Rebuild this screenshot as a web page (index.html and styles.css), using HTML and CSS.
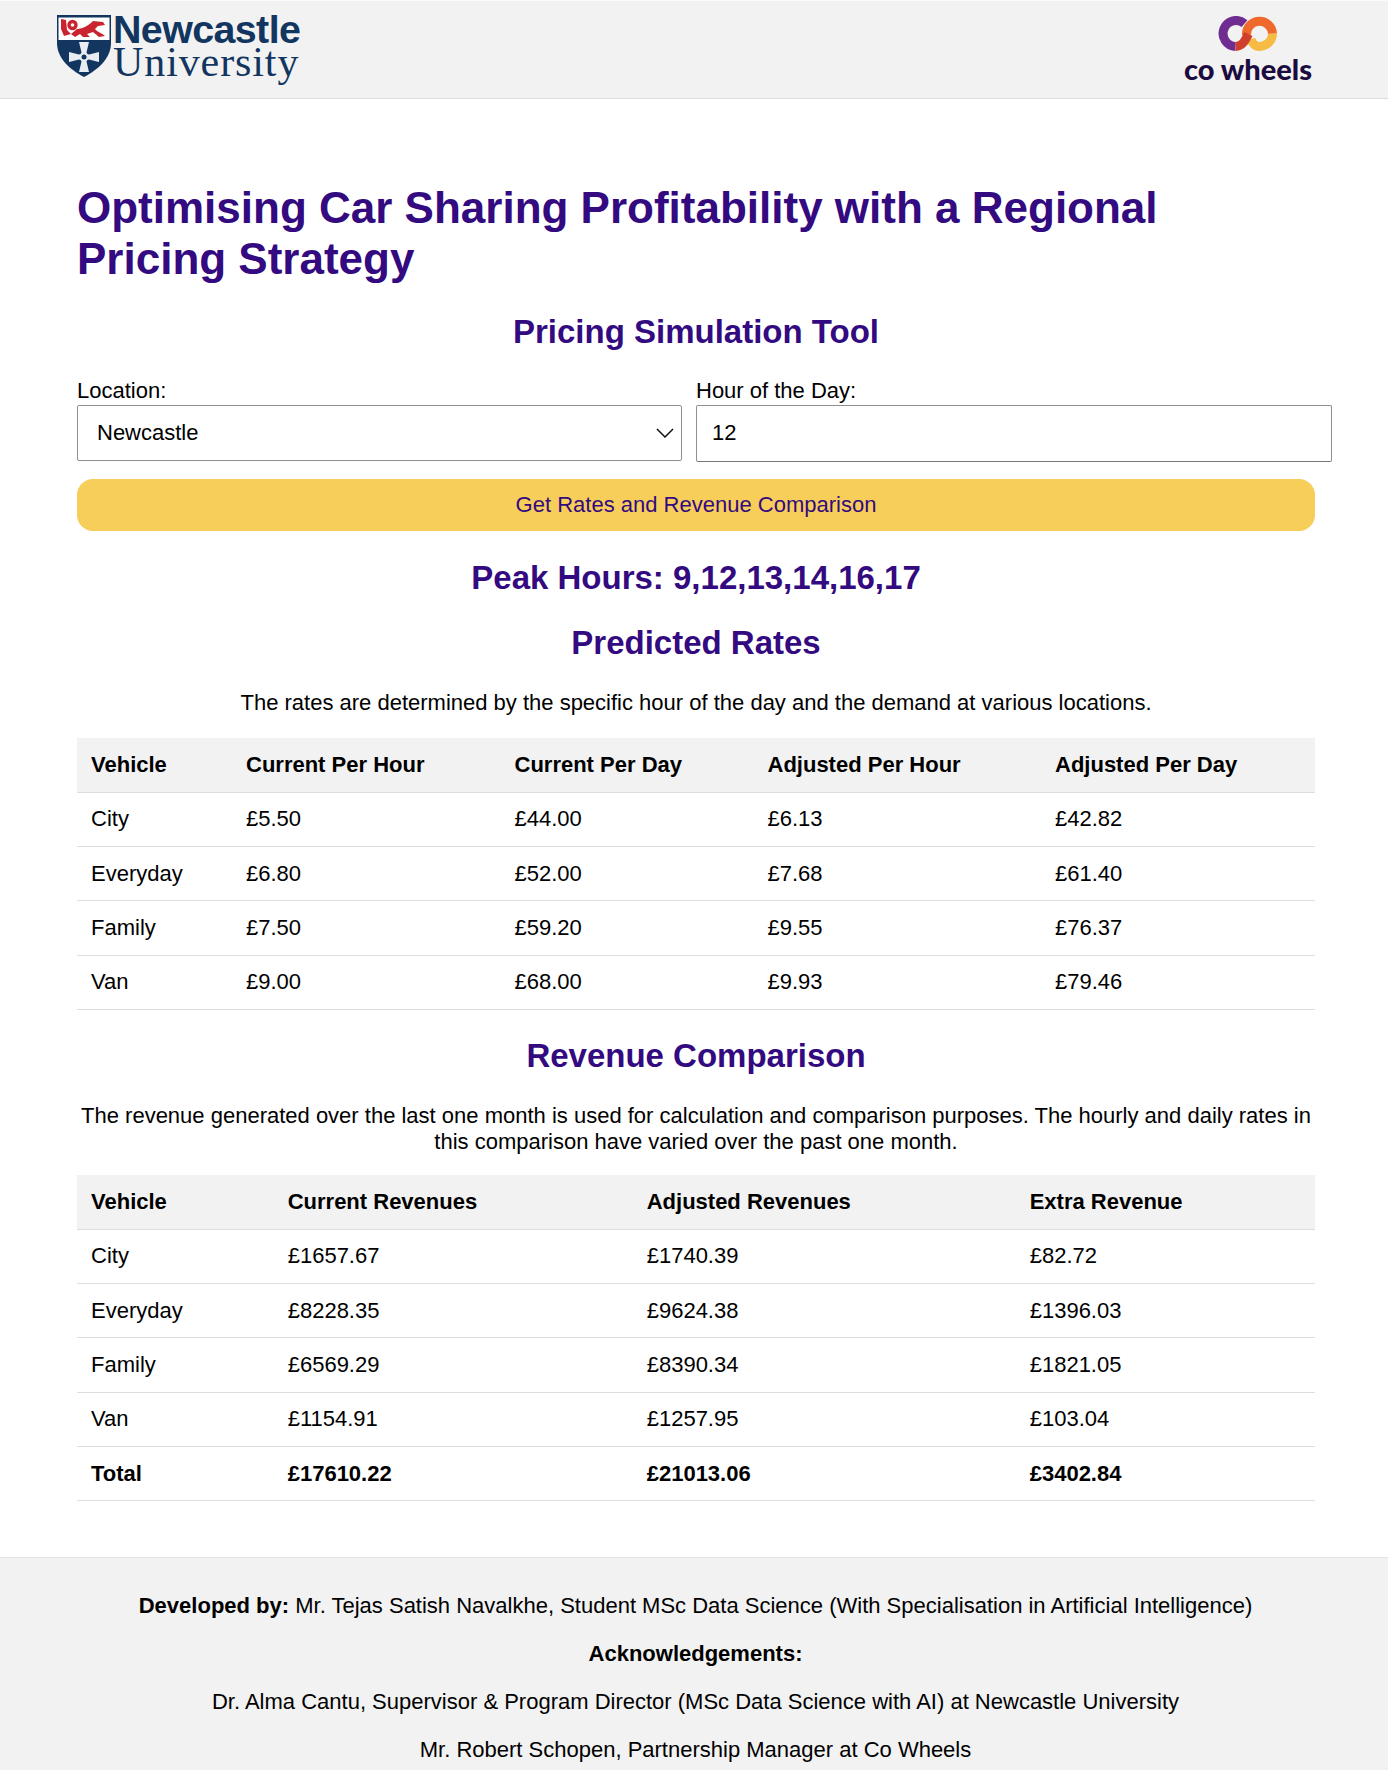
FILE: index.html
```html
<!DOCTYPE html>
<html lang="en">
<head>
    <meta charset="UTF-8">
    <meta name="viewport" content="width=device-width, initial-scale=1.0">
    <title>Pricing Simulation Tool</title>
    <link rel="stylesheet" href="styles.css">
</head>
<body>
    <header class="site-header">
        <div class="ncl-logo">
            <svg class="ncl-shield" width="54" height="62" viewBox="0 0 54 62">
                <path d="M0 0H54V28C54 44 40 55 27 62C14 55 0 44 0 28Z" fill="#12365f"/>
                <rect x="1.5" y="2.5" width="51" height="22.5" fill="#fff"/>
                <path d="M4 4L9 5L10 15L14 19L7 21L4 14Z" fill="#c9242f"/>
                <circle cx="15.5" cy="10" r="5.2" fill="#c9242f"/>
                <circle cx="15.5" cy="10" r="1.8" fill="#fff"/>
                <path d="M20 14C26 14 32 10 36 6L46 7L48 10L41 11L38 14C40 17 45 18 48 21L42 22L36 17L30 19L33 22H26L23 19L18 22L14 19Z" fill="#c9242f"/>
                <path d="M22 27H32L29.5 37.5Q30 39.5 32 39.5L42 37V47L32 44.5Q30 44.5 29.5 46.5L32 57H22L24.5 46.5Q24 44.5 22 44.5L12 47V37L22 39.5Q24 39.5 24.5 37.5Z" fill="#e9edf2"/>
                <circle cx="27" cy="42" r="2.5" fill="#12365f"/>
            </svg>
            <div class="ncl-text">
                <div class="ncl-name">Newcastle</div>
                <div class="ncl-uni">University</div>
            </div>
        </div>
        <div class="cw-logo">
            <svg class="cw-mark" width="59" height="35" viewBox="0 0 59 35">
                <path d="M26.5 7.6A13 13 0 1 0 17.5 30.5" fill="none" stroke="#6f2c91" stroke-width="9"/>
                <path d="M54.5 17.5A13 13 0 0 1 41.5 30.5C37 30.5 34 27 33 23" fill="none" stroke="#f6bb42" stroke-width="9"/>
                <path d="M28.5 19A13 13 0 0 1 54.5 17.5" fill="none" stroke="#f0692c" stroke-width="9"/>
                <path d="M17.5 30.5C24 30.5 27 25 30.5 18" fill="none" stroke="#cf3f2a" stroke-width="9"/>
            </svg>
            <div class="cw-name">co wheels</div>
        </div>
    </header>

    <main class="content">
        <h1>Optimising Car Sharing Profitability with a Regional Pricing Strategy</h1>
        <h2>Pricing Simulation Tool</h2>

        <div class="form-row">
            <div class="field field-location">
                <label>Location:</label>
                <div class="select-box">
                    <span>Newcastle</span>
                    <svg width="18" height="10" viewBox="0 0 18 10"><path d="M1 1L9 9L17 1" fill="none" stroke="#111" stroke-width="1.5"/></svg>
                </div>
            </div>
            <div class="field field-hour">
                <label>Hour of the Day:</label>
                <div class="input-box">12</div>
            </div>
        </div>

        <button class="submit-btn">Get Rates and Revenue Comparison</button>

        <h2 class="peak">Peak Hours: 9,12,13,14,16,17</h2>
        <h2 class="section-title">Predicted Rates</h2>
        <p class="note">The rates are determined by the specific hour of the day and the demand at various locations.</p>

        <table class="rates">
            <thead>
                <tr><th>Vehicle</th><th>Current Per Hour</th><th>Current Per Day</th><th>Adjusted Per Hour</th><th>Adjusted Per Day</th></tr>
            </thead>
            <tbody>
                <tr><td>City</td><td>£5.50</td><td>£44.00</td><td>£6.13</td><td>£42.82</td></tr>
                <tr><td>Everyday</td><td>£6.80</td><td>£52.00</td><td>£7.68</td><td>£61.40</td></tr>
                <tr><td>Family</td><td>£7.50</td><td>£59.20</td><td>£9.55</td><td>£76.37</td></tr>
                <tr><td>Van</td><td>£9.00</td><td>£68.00</td><td>£9.93</td><td>£79.46</td></tr>
            </tbody>
        </table>

        <h2 class="section-title revenue-title">Revenue Comparison</h2>
        <p class="note">The revenue generated over the last one month is used for calculation and comparison purposes. The hourly and daily rates in this comparison have varied over the past one month.</p>

        <table class="revenue">
            <thead>
                <tr><th>Vehicle</th><th>Current Revenues</th><th>Adjusted Revenues</th><th>Extra Revenue</th></tr>
            </thead>
            <tbody>
                <tr><td>City</td><td>£1657.67</td><td>£1740.39</td><td>£82.72</td></tr>
                <tr><td>Everyday</td><td>£8228.35</td><td>£9624.38</td><td>£1396.03</td></tr>
                <tr><td>Family</td><td>£6569.29</td><td>£8390.34</td><td>£1821.05</td></tr>
                <tr><td>Van</td><td>£1154.91</td><td>£1257.95</td><td>£103.04</td></tr>
                <tr class="total"><td>Total</td><td>£17610.22</td><td>£21013.06</td><td>£3402.84</td></tr>
            </tbody>
        </table>
    </main>

    <footer class="site-footer">
        <p><strong>Developed by:</strong> Mr. Tejas Satish Navalkhe, Student MSc Data Science (With Specialisation in Artificial Intelligence)</p>
        <p><strong>Acknowledgements:</strong></p>
        <p>Dr. Alma Cantu, Supervisor &amp; Program Director (MSc Data Science with AI) at Newcastle University</p>
        <p>Mr. Robert Schopen, Partnership Manager at Co Wheels</p>
    </footer>
</body>
</html>
```
FILE: styles.css
```css
* {
    box-sizing: border-box;
}
body {
    margin: 0;
    height: 1770px;
    overflow: hidden;
    background: #fff;
    font-family: "Liberation Sans", Arial, sans-serif;
    font-size: 22px;
    color: #000;
}

.site-header {
    height: 99px;
    background: #f2f2f2;
    border-top: 1px solid #fafafa;
    border-bottom: 1px solid #ddd;
    display: flex;
    justify-content: space-between;
    padding: 14px 76px 0 57px;
}
.ncl-logo {
    display: flex;
    gap: 2px;
}
.ncl-text {
    color: #12365f;
    font-family: "Liberation Serif", serif;
    margin-top: -2px;
}
.ncl-name {
    font-family: "Liberation Sans", sans-serif;
    font-weight: bold;
    font-size: 39.4px;
    letter-spacing: -0.6px;
    height: 32px;
    line-height: 32px;
}
.ncl-uni {
    font-size: 42px;
    letter-spacing: 0.9px;
    height: 34px;
    line-height: 34px;
}
.cw-logo {
    display: flex;
    flex-direction: column;
    align-items: center;
    padding-top: 1px;
}
.cw-name {
    font-family: "Lato", sans-serif;
    font-weight: 900;
    font-size: 29px;
    line-height: 34px;
    margin-top: 1px;
    color: #1b0b3f;
}

.content {
    padding: 83px 73px 0 77px;
}
h1 {
    margin: 0;
    color: #330a7f;
    font-size: 44px;
    line-height: 51px;
    font-weight: bold;
}
h2 {
    margin: 0;
    color: #330a7f;
    font-size: 33px;
    line-height: 40px;
    text-align: center;
    width: 1238px;
    font-weight: bold;
}
h1 + h2 {
    margin-top: 28px;
}

.form-row {
    display: flex;
    gap: 14px;
    margin-top: 25px;
}
.field {
    flex-shrink: 0;
}
.field label {
    display: block;
    line-height: 28px;
}
.field-location {
    width: 605px;
}
.field-hour {
    width: 636px;
}
.select-box,
.input-box {
    background: #fff;
    border: 1px solid #8f8f8f;
    border-radius: 2px;
    display: flex;
    align-items: center;
    justify-content: space-between;
    padding: 0 7px 0 19px;
}
.select-box {
    height: 56px;
}
.input-box {
    height: 57px;
    padding: 0 8px 2px 15px;
    border-bottom-color: #777;
}

.submit-btn {
    display: block;
    width: 1238px;
    height: 52px;
    margin-top: 17px;
    border: 0;
    border-radius: 16px;
    background: #f8ce5a;
    color: #330a7f;
    font-family: inherit;
    font-size: 22px;
}
.peak {
    margin-top: 27px;
}
.section-title {
    margin-top: 25px;
}
.revenue-title {
    margin-top: 26px;
}
.note {
    margin: 27px 0 0;
    width: 1238px;
    text-align: center;
    line-height: 26px;
}

table {
    width: 1238px;
    table-layout: fixed;
    border-collapse: collapse;
    margin-top: 22px;
}
table.revenue {
    margin-top: 20px;
}
th, td {
    height: 54.3px;
    padding: 0 14px;
    text-align: left;
    border-bottom: 1px solid #ddd;
}
th {
    background: #f2f2f2;
}
.rates th:nth-child(1) { width: 155px; }
.rates th:nth-child(2) { width: 268.5px; }
.rates th:nth-child(3) { width: 253px; }
.rates th:nth-child(4) { width: 287.5px; }
.rates th:nth-child(5) { width: 274px; }
.revenue th:nth-child(1) { width: 196.7px; }
.revenue th:nth-child(2) { width: 359px; }
.revenue th:nth-child(3) { width: 383px; }
.revenue th:nth-child(4) { width: 299.3px; }
.total td {
    font-weight: bold;
}

.site-footer {
    margin-top: 56px;
    padding: 34px 0 40px 3px;
    background: #f2f2f2;
    border-top: 1px solid #e4e4e4;
    text-align: center;
}
.site-footer p {
    margin: 0 0 21px;
    line-height: 27px;
}
```
